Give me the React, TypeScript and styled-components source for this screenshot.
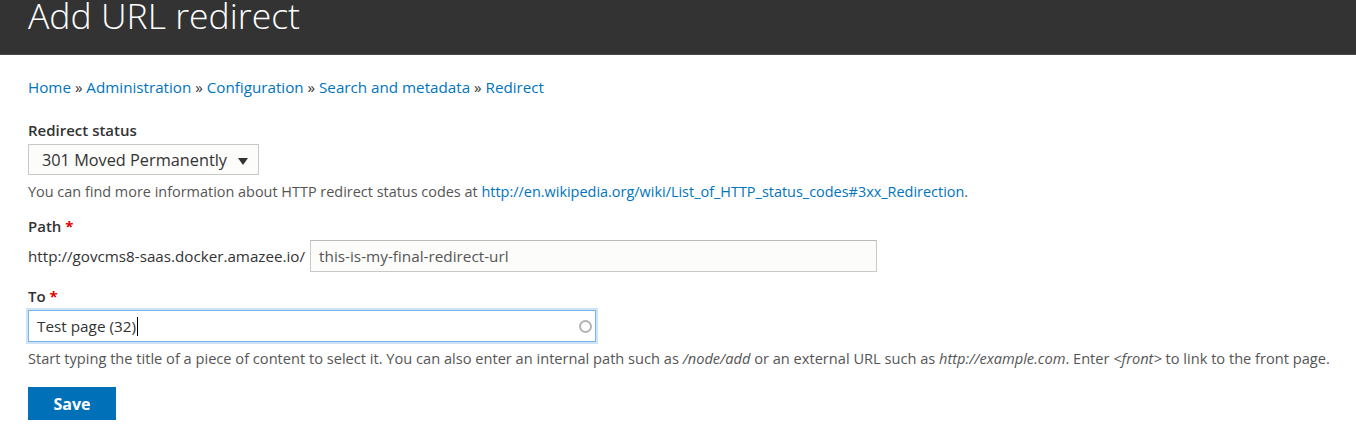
import styled, { createGlobalStyle } from "styled-components";

const COLORS = {
  header: "#333333",
  text: "#333333",
  muted: "#555555",
  link: "#0074bd",
  border: "#cccccc",
  inputBg: "#fcfcfa",
  focus: "#7db5e6",
  button: "#0071b8",
  required: "#e00000",
};

const GlobalStyle = createGlobalStyle`
  html, body {
    margin: 0;
    padding: 0;
    background: #ffffff;
  }
  body {
    font-family: "Open Sans", "Liberation Sans", sans-serif;
    color: ${COLORS.text};
  }
`;

export default function App() {
  return (
    <>
      <GlobalStyle />
      <Header>
        <Title>Add URL redirect</Title>
      </Header>
      <Content>
        <Breadcrumb>
          <a href="#">Home</a> » <a href="#">Administration</a> »{" "}
          <a href="#">Configuration</a> » <a href="#">Search and metadata</a> »{" "}
          <a href="#">Redirect</a>
        </Breadcrumb>

        <FormItem>
          <Label>Redirect status</Label>
          <SelectBox>
            <span>301 Moved Permanently</span>
            <Arrow />
          </SelectBox>
          <Description>
            You can find more information about HTTP redirect status codes at{" "}
            <a href="#">
              http://en.wikipedia.org/wiki/List_of_HTTP_status_codes#3xx_Redirection
            </a>
            .
          </Description>
        </FormItem>

        <FormItem>
          <Label>
            Path <Required>*</Required>
          </Label>
          <PrefixRow>
            <Prefix>http://govcms8-saas.docker.amazee.io/</Prefix>
            <TextBox $width={567}>this-is-my-final-redirect-url</TextBox>
          </PrefixRow>
        </FormItem>

        <FormItem>
          <Label>
            To <Required>*</Required>
          </Label>
          <TextBox $width={568} $focused>
            <span>
              Test page (32)
              <Caret />
            </span>
            <Throbber />
          </TextBox>
          <Description $afterFocus>
            Start typing the title of a piece of content to select it. You can
            also enter an internal path such as <em>/node/add</em> or an external
            URL such as <em>http://example.com</em>. Enter <em>&lt;front&gt;</em>{" "}
            to link to the front page.
          </Description>
        </FormItem>

        <SaveButton>Save</SaveButton>
      </Content>
    </>
  );
}

const Header = styled.header`
  height: 54px;
  background: ${COLORS.header};
  border-bottom: 1px solid #4a4a4a;
  overflow: hidden;
`;

const Title = styled.h1`
  margin: -3px 0 0 28px;
  font-size: 35.6px;
  line-height: 36px;
  font-weight: 300;
  color: #ffffff;
`;

const Content = styled.main`
  padding: 20px 28px 0;
  display: flex;
  flex-direction: column;
  align-items: flex-start;

  a {
    color: ${COLORS.link};
    text-decoration: none;
  }
`;

const Breadcrumb = styled.nav`
  font-size: 15.2px;
  line-height: 24px;
  color: ${COLORS.text};
  margin-bottom: 21px;
`;

const FormItem = styled.div`
  display: flex;
  flex-direction: column;
  align-items: flex-start;
  margin-bottom: 14px;
`;

const Label = styled.label`
  font-size: 15px;
  line-height: 20px;
  font-weight: 600;
  margin-bottom: 4px;
`;

const Required = styled.span`
  color: ${COLORS.required};
  font-weight: 700;
`;

const SelectBox = styled.div`
  box-sizing: border-box;
  width: 231px;
  height: 31px;
  display: flex;
  align-items: center;
  justify-content: space-between;
  padding: 0 10px 0 13px;
  border: 1px solid #c8c8c8;
  background: ${COLORS.inputBg};
  font-size: 16.3px;
  color: ${COLORS.text};
`;

const Arrow = styled.span`
  width: 0;
  height: 0;
  margin-top: 3px;
  border-left: 5px solid transparent;
  border-right: 5px solid transparent;
  border-top: 7px solid #333;
`;

const Description = styled.div<{ $afterFocus?: boolean }>`
  font-size: ${(p) => (p.$afterFocus ? "14.62px" : "14.45px")};
  line-height: 20px;
  color: ${COLORS.muted};
  margin-top: ${(p) => (p.$afterFocus ? "6px" : "7px")};
  white-space: nowrap;

  em {
    font-style: italic;
  }
`;

const PrefixRow = styled.div`
  display: flex;
  align-items: center;
  gap: 5px;
`;

const Prefix = styled.span`
  font-size: 15.2px;
  color: ${COLORS.text};
`;

const TextBox = styled.div<{ $width: number; $focused?: boolean }>`
  box-sizing: border-box;
  width: ${(p) => p.$width}px;
  height: 32px;
  display: flex;
  align-items: center;
  justify-content: space-between;
  padding: 0 8px;
  font-size: 15.3px;
  background: ${(p) => (p.$focused ? "#ffffff" : COLORS.inputBg)};
  color: ${(p) => (p.$focused ? COLORS.text : "#555")};
  border: 1px solid ${(p) => (p.$focused ? COLORS.focus : "#c8c8c8")};
  border-top-color: ${(p) => (p.$focused ? COLORS.focus : "#b9b9b9")};
  box-shadow: ${(p) => (p.$focused ? "0 0 0 2px #cfe3f6" : "none")};
`;

const Caret = styled.span`
  display: inline-block;
  width: 1px;
  height: 19px;
  margin-left: 1px;
  vertical-align: -4px;
  background: #000;
`;

const Throbber = styled.span`
  box-sizing: border-box;
  width: 13px;
  height: 13px;
  border-radius: 50%;
  border: 2px solid #b3b3b3;
  margin-right: -5px;
`;

const SaveButton = styled.button`
  margin-top: 5px;
  width: 88px;
  height: 33px;
  border: none;
  border-radius: 0;
  background: ${COLORS.button};
  color: #ffffff;
  font-family: "Open Sans", "Liberation Sans", sans-serif;
  font-size: 16px;
  font-weight: 700;
  cursor: pointer;
`;
